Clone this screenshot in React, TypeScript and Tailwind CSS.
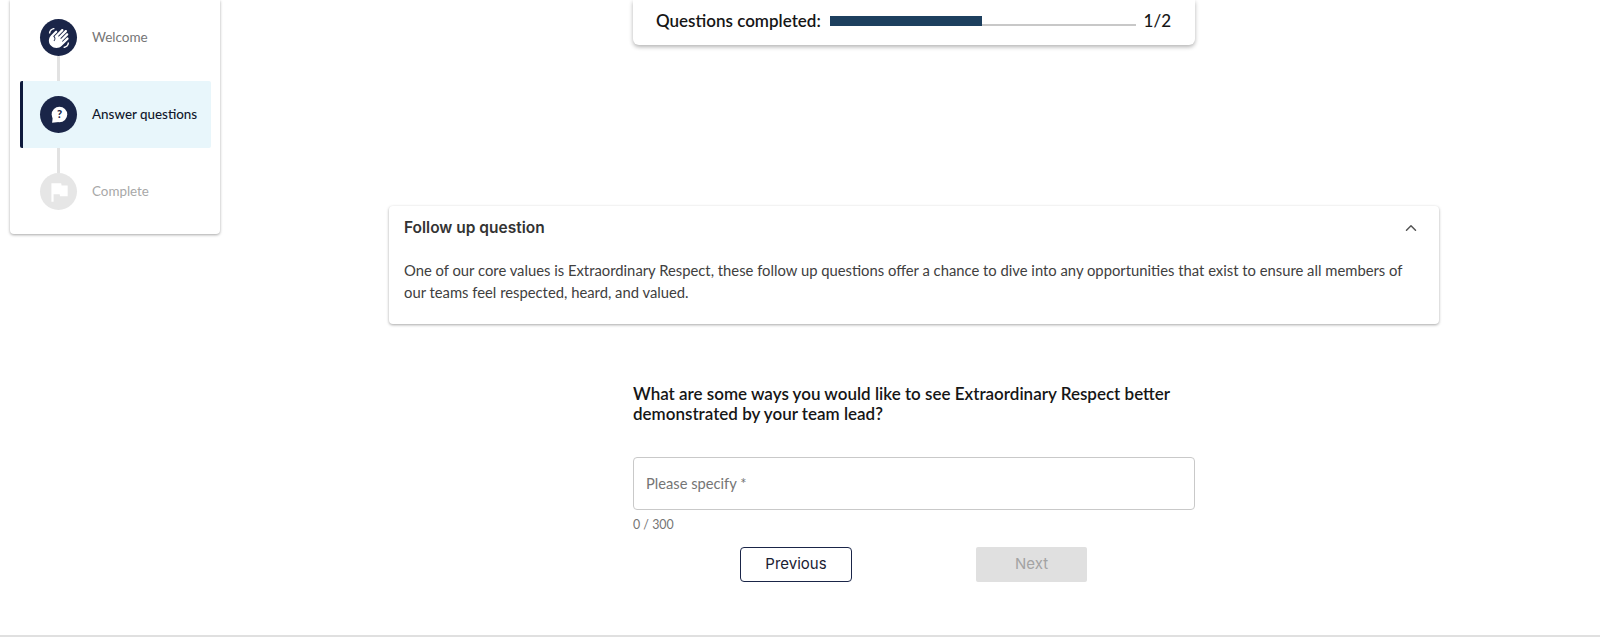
import { ChevronUp } from "lucide-react";
import { MdWavingHand, MdFlag } from "react-icons/md";

const lato = "font-['Lato','Noto_Sans',sans-serif]";
const heading = "font-['Inter','Noto_Sans',sans-serif]";

function StepCircle({ muted, children }: { muted?: boolean; children: React.ReactNode }) {
  return (
    <div className={`flex h-[37px] w-[37px] shrink-0 items-center justify-center rounded-full ${muted ? "bg-[#e6e6e6]" : "bg-[#1a2548]"}`}>
      {children}
    </div>
  );
}

function Connector() {
  return <div className="ml-[47px] h-[25px] w-[3px] bg-[#e2e2e2]" />;
}

function Sidebar() {
  return (
    <aside className="ml-[10px] h-[234px] w-[210px] shrink-0 rounded-b-[4px] bg-white pt-[19px] shadow-[0_1px_3px_rgba(0,0,0,0.35)]">
      <div className="flex h-[37px] items-center pl-[30px]">
        <StepCircle>
          <MdWavingHand className="h-[22px] w-[22px] text-white" />
        </StepCircle>
        <span className="ml-[15px] text-[13.5px] text-[#757575]">Welcome</span>
      </div>
      <Connector />
      <div className="ml-[10px] mr-[9px] flex h-[67px] items-center rounded-[2px] border-l-[3px] border-[#0e1a3c] bg-[#e8f6fb] pl-[17px]">
        <StepCircle>
          <svg viewBox="0 0 24 24" className="h-[22px] w-[22px]">
            <circle cx="12.5" cy="11.5" r="8.5" fill="#fff" />
            <path d="M4.5 20.5 L5.5 11 L12 19.5 Z" fill="#fff" />
            <text x="12.5" y="15.8" textAnchor="middle" fontSize="12" fontWeight="900" fontFamily="Lato, sans-serif" fill="#1a2548">?</text>
          </svg>
        </StepCircle>
        <span className="ml-[15px] text-[13.4px] font-medium text-[#10162c]">Answer questions</span>
      </div>
      <Connector />
      <div className="flex h-[37px] items-center pl-[30px]">
        <StepCircle muted>
          <MdFlag className="h-[26px] w-[26px] text-white" />
        </StepCircle>
        <span className="ml-[15px] text-[13.4px] text-[#a8a8a8]">Complete</span>
      </div>
    </aside>
  );
}

export default function App() {
  return (
    <div className={`${lato} flex h-[637px] flex-col overflow-hidden bg-white`}>
      <div className="flex min-h-0 flex-1">
        <Sidebar />
        <main className="ml-[169px] w-[1050px]">
          <div className="ml-[244px] flex h-[45px] w-[562px] items-center rounded-b-[6px] bg-white pb-[3px] pl-[23px] pr-[24px] shadow-[0_2px_4px_rgba(0,0,0,0.3)]">
            <span className="w-[174px] text-[17px] font-semibold text-[#161616]">Questions completed:</span>
            <div className="flex h-[10px] w-[306px] items-end">
              <div className="h-[10px] w-[152px] bg-[#1d3f5e]" />
              <div className="h-[2px] flex-1 bg-[#c8c8c8]" />
            </div>
            <span className="ml-auto text-[17px] font-medium text-[#161616]">1/2</span>
          </div>

          <section className="mt-[161px] h-[118px] rounded-[4px] bg-white pl-[15px] pr-[19px] shadow-[0_1px_3px_rgba(0,0,0,0.35)]">
            <div className="flex h-[44px] items-center justify-between">
              <h2 className={`${heading} text-[15.5px] font-semibold text-[#333333]`}>Follow up question</h2>
              <ChevronUp className="h-[18px] w-[18px] text-[#555555]" strokeWidth={2} />
            </div>
            <p className="mt-[9px] text-[14.8px] leading-[22px] text-[#404040]">
              One of our core values is Extraordinary Respect, these follow up questions offer a chance to dive into any opportunities that exist to ensure all members of our teams feel respected, heard, and valued.
            </p>
          </section>

          <div className="ml-[244px] mt-[60px] w-[562px]">
            <h3 className="text-[17px] font-semibold leading-[20px] text-[#161616]">
              What are some ways you would like to see Extraordinary Respect better demonstrated by your team lead?
            </h3>
            <div className="mt-[33px] flex h-[53px] items-center rounded-[4px] border border-[#c9c9c9] px-[12px] text-[14.7px] text-[#757575]">
              Please specify *
            </div>
            <p className="mt-[7px] text-[12.4px] leading-[16px] text-[#757575]">0 / 300</p>
            <div className="mt-[14px] flex">
              <button className={`${heading} ml-[107px] h-[35px] w-[112px] rounded-[4px] border border-[#1a2548] text-[15px] font-normal text-[#1a2032]`}>
                Previous
              </button>
              <button className={`${heading} ml-[124px] h-[35px] w-[111px] rounded-[2px] bg-[#e0e0e0] text-[15px] font-normal text-[#a3a3a3]`}>
                Next
              </button>
            </div>
          </div>
        </main>
      </div>
      <div className="h-[2px] bg-[#e0e0e0]" />
    </div>
  );
}
